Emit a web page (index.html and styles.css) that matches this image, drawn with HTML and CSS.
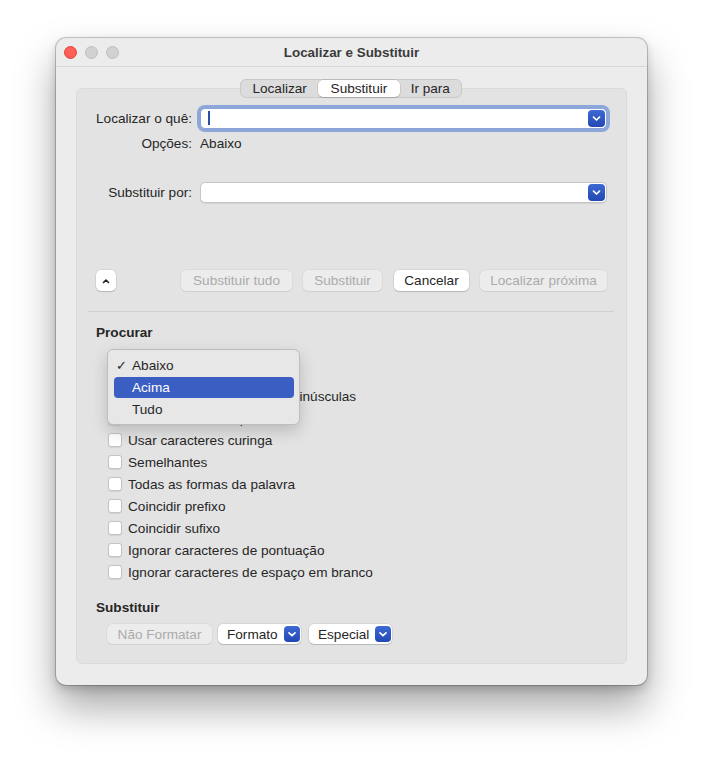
FILE: index.html
```html
<!DOCTYPE html>
<html lang="pt">
<head>
    <meta charset="UTF-8">
    <title>Localizar e Substituir</title>
    <link rel="stylesheet" href="styles.css">
</head>
<body>
    <div class="desktop">
    <div class="window">
        <div class="titlebar">
            <div class="lights">
                <span class="light red"></span>
                <span class="light"></span>
                <span class="light"></span>
            </div>
            <div class="title">Localizar e Substituir</div>
        </div>

        <div class="tabs">
            <span class="tab tab-1">Localizar</span>
            <span class="tab tab-2 selected">Substituir</span>
            <span class="tab tab-3">Ir para</span>
        </div>

        <div class="panel">
            <div class="form-row first">
                <span class="label">Localizar o quê:</span>
                <div class="field focused">
                    <span class="caret"></span>
                    <span class="combo-btn"><svg width="17" height="17" viewBox="0 0 17 17"><path d="M5.5 7.2 L8.5 10 L11.5 7.2" fill="none" stroke="#fff" stroke-width="1.7" stroke-linecap="round" stroke-linejoin="round"/></svg></span>
                </div>
            </div>
            <div class="form-row options">
                <span class="label">Opções:</span>
                <span class="value">Abaixo</span>
            </div>
            <div class="form-row replace">
                <span class="label">Substituir por:</span>
                <div class="field">
                    <span class="combo-btn"><svg width="17" height="17" viewBox="0 0 17 17"><path d="M5.5 7.2 L8.5 10 L11.5 7.2" fill="none" stroke="#fff" stroke-width="1.7" stroke-linecap="round" stroke-linejoin="round"/></svg></span>
                </div>
            </div>

            <div class="button-row">
                <span class="btn toggle"><svg width="20" height="20" viewBox="0 0 20 20"><path d="M7.5 11.5 L10 9 L12.5 11.5" fill="none" stroke="#222" stroke-width="1.6" stroke-linecap="round" stroke-linejoin="round"/></svg></span>
                <span class="btn disabled w-all">Substituir tudo</span>
                <span class="btn disabled w-one">Substituir</span>
                <span class="btn w-cancel">Cancelar</span>
                <span class="btn disabled w-next">Localizar próxima</span>
            </div>

            <div class="separator"></div>

            <div class="section-title search-title">Procurar</div>
            <div class="popup-row"></div>
            <div class="checks">
                <div class="check"><span class="box"></span>Diferenciar maiúsculas de minúsculas</div>
                <div class="check"><span class="box"></span>Palavras inteiras apenas</div>
                <div class="check"><span class="box"></span>Usar caracteres curinga</div>
                <div class="check"><span class="box"></span>Semelhantes</div>
                <div class="check"><span class="box"></span>Todas as formas da palavra</div>
                <div class="check"><span class="box"></span>Coincidir prefixo</div>
                <div class="check"><span class="box"></span>Coincidir sufixo</div>
                <div class="check"><span class="box"></span>Ignorar caracteres de pontuação</div>
                <div class="check"><span class="box"></span>Ignorar caracteres de espaço em branco</div>
            </div>

            <div class="section-title replace-title">Substituir</div>
            <div class="format-row">
                <span class="btn disabled w-noformat">Não Formatar</span>
                <span class="btn popup w-format">Formato<span class="combo-btn small"><svg width="16" height="16" viewBox="0 0 16 16"><path d="M5 6.8 L8 9.6 L11 6.8" fill="none" stroke="#fff" stroke-width="1.7" stroke-linecap="round" stroke-linejoin="round"/></svg></span></span>
                <span class="btn popup w-special">Especial<span class="combo-btn small"><svg width="16" height="16" viewBox="0 0 16 16"><path d="M5 6.8 L8 9.6 L11 6.8" fill="none" stroke="#fff" stroke-width="1.7" stroke-linecap="round" stroke-linejoin="round"/></svg></span></span>
            </div>

            <div class="menu">
                <div class="menu-item"><span class="mark">✓</span>Abaixo</div>
                <div class="menu-item active">Acima</div>
                <div class="menu-item">Tudo</div>
            </div>
        </div>
    </div>
    </div>
</body>
</html>
```

FILE: styles.css
```css
body {
    margin: 0;
    background: #ffffff;
    font-family: 'Liberation Sans', Arial, sans-serif;
    font-size: 13.6px;
    color: #262626;
}
.desktop {
    height: 759px;
    padding-top: 38px;
    box-sizing: border-box;
}
.window {
    margin-left: 56px;
    width: 591px;
    height: 647px;
    box-sizing: border-box;
    background: #ececec;
    border-radius: 10px;
    box-shadow: 0 0 0 1px rgba(0, 0, 0, 0.2), 0 4px 10px rgba(0, 0, 0, 0.18), 0 22px 40px rgba(0, 0, 0, 0.35);
}
.titlebar {
    height: 28px;
    border-bottom: 1px solid #d7d7d7;
    display: flex;
    align-items: center;
    position: relative;
}
.lights {
    display: flex;
    gap: 8px;
    margin-left: 8px;
}
.light {
    width: 11px;
    height: 11px;
    border-radius: 50%;
    background: #d1d1d1;
    border: 0.5px solid #bfbfbf;
}
.light.red {
    background: #fe5f57;
    border-color: #e1443e;
}
.title {
    position: absolute;
    left: 0;
    right: 0;
    text-align: center;
    font-weight: bold;
    font-size: 13.4px;
    color: #3b3b3b;
    pointer-events: none;
}
.tabs {
    display: flex;
    width: 222px;
    height: 19px;
    margin: 12px 0 0 184px;
    background: #dcdcdc;
    border: 0.5px solid #c9c9c9;
    border-radius: 6px;
    box-sizing: border-box;
    position: relative;
    z-index: 1;
}
.tab {
    display: flex;
    align-items: center;
    justify-content: center;
    height: 100%;
    color: #262626;
}
.tab-1 { width: 78px; }
.tab-2 { width: 82px; }
.tab-3 { width: 62px; }
.tab.selected {
    background: #ffffff;
    border-radius: 5px;
    box-shadow: 0 0 0 0.5px rgba(0, 0, 0, 0.15), 0 1px 1px rgba(0, 0, 0, 0.12);
}
.panel {
    position: relative;
    margin: -10px 20px 0 20px;
    height: 576px;
    box-sizing: border-box;
    background: #e3e3e3;
    border: 1px solid #dadada;
    border-radius: 6px;
    display: flex;
    flex-direction: column;
}
.form-row {
    display: flex;
    align-items: center;
    height: 22px;
}
.form-row.first { margin-top: 18px; }
.form-row.options { margin-top: 3px; }
.form-row.replace { margin-top: 27px; }
.label {
    width: 115px;
    text-align: right;
    margin-right: 8px;
    color: #262626;
    white-space: nowrap;
}
.field {
    width: 407px;
    height: 21px;
    box-sizing: border-box;
    background: #ffffff;
    border: 0.5px solid #c6c6c6;
    border-radius: 5px;
    display: flex;
    align-items: center;
    justify-content: space-between;
    padding: 0 1px 0 7px;
    box-shadow: 0 0.5px 1px rgba(0, 0, 0, 0.08);
}
.field.focused {
    border-color: #8aa3d8;
    box-shadow: 0 0 0 3px #8ea7da;
}
.field:not(.focused) { justify-content: flex-end; }
.caret {
    width: 2px;
    height: 14px;
    background: #2a4fa8;
}
.combo-btn {
    width: 17px;
    height: 17px;
    border-radius: 4px;
    background: linear-gradient(#3d6ad4, #2247b2);
    display: flex;
    align-items: center;
    justify-content: center;
}
.combo-btn.small {
    width: 16px;
    height: 16px;
    margin-left: auto;
}
.button-row {
    display: flex;
    align-items: center;
    height: 21px;
    margin-top: 67px;
    padding-left: 19px;
}
.btn {
    height: 21px;
    box-sizing: border-box;
    display: flex;
    align-items: center;
    justify-content: center;
    background: #ffffff;
    border-radius: 5px;
    box-shadow: 0 0 0 0.5px rgba(0, 0, 0, 0.12), 0 1px 1px rgba(0, 0, 0, 0.14);
    color: #262626;
    white-space: nowrap;
}
.btn.disabled {
    background: #ececec;
    color: #ababab;
    box-shadow: 0 0 0 0.5px rgba(0, 0, 0, 0.06), 0 0.5px 1px rgba(0, 0, 0, 0.06);
}
.toggle { width: 20px; }
.w-all { width: 111px; margin-left: 65px; }
.w-one { width: 79px; margin-left: 11px; }
.w-cancel { width: 75px; margin-left: 12px; }
.w-next { width: 127px; margin-left: 11px; }
.separator {
    height: 1px;
    background: #d0d0d0;
    margin: 20px 12px 0 11px;
}
.section-title {
    font-weight: bold;
    height: 16px;
    line-height: 16px;
    padding-left: 19px;
}
.search-title { margin-top: 13px; }
.popup-row {
    height: 22px;
    margin-top: 12px;
}
.checks {
    margin-top: 10px;
    padding-left: 31px;
}
.check {
    display: flex;
    align-items: center;
    height: 22px;
    white-space: nowrap;
}
.box {
    width: 14px;
    height: 14px;
    box-sizing: border-box;
    background: #ffffff;
    border: 0.5px solid #c4c4c4;
    border-radius: 3px;
    margin-right: 6px;
    box-shadow: 0 0.5px 1px rgba(0, 0, 0, 0.08);
}
.replace-title { margin-top: 17px; }
.format-row {
    display: flex;
    align-items: center;
    height: 20px;
    margin-top: 8px;
    padding-left: 30px;
}
.format-row .btn { height: 20px; }
.w-noformat { width: 105px; }
.btn.popup {
    justify-content: flex-start;
    padding: 0 1px 0 9px;
}
.w-format { width: 83px; margin-left: 6px; }
.w-special { width: 83px; margin-left: 8px; }
.menu {
    position: absolute;
    left: 30px;
    top: 260px;
    width: 193px;
    height: 76px;
    box-sizing: border-box;
    padding-top: 5px;
    background: #e7e7e7;
    border: 0.5px solid #bdbdbd;
    border-radius: 6px;
    box-shadow: 0 6px 16px rgba(0, 0, 0, 0.18);
}
.menu-item {
    position: relative;
    height: 22px;
    line-height: 22px;
    padding-left: 18px;
    margin: 0 5px 0 6px;
    border-radius: 4px;
    color: #262626;
}
.menu-item.active {
    height: 21px;
    line-height: 21px;
    margin-bottom: 1px;
    background: #3b5ec2;
    color: #ffffff;
}
.mark {
    position: absolute;
    left: 2px;
    top: 0;
    font-family: 'DejaVu Sans', sans-serif;
    font-size: 13px;
    font-weight: bold;
}
```
